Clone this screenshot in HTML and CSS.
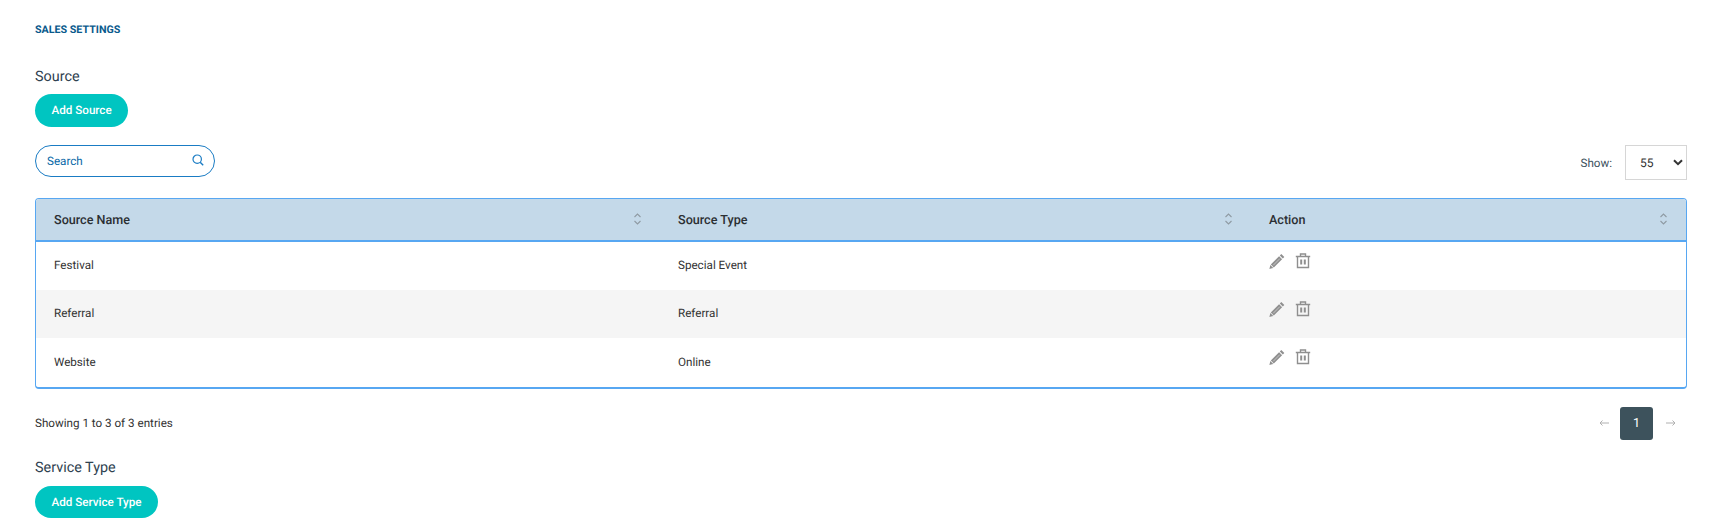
FILE: index.html
```html
<!DOCTYPE html>
<html lang="en">
<head>
<meta charset="utf-8">
<title>Sales Settings</title>
<link rel="stylesheet" href="styles.css">
</head>
<body>
<svg class="defs" width="0" height="0" aria-hidden="true">
  <symbol id="pencil" viewBox="0 0 16 16">
    <path d="M12.300 1l3 3-1.500 1.500-3-3z" fill="currentColor"/>
    <path d="M10.100 3.200l3 3-8.300 8.300-3-3z" fill="currentColor"/>
    <path d="M1.300 12l3 3-3.900.9z" fill="currentColor"/>
    <path d="M10.900 5.600l-6.700 6.700" stroke="#fff" stroke-opacity=".55" stroke-width=".9"/>
  </symbol>
  <symbol id="trash" viewBox="0 0 16 16">
    <path d="M5.500 3V1h5v2M.8 3.500h14.400M2.500 3.500v11h11v-11" fill="none" stroke="currentColor" stroke-width="1.400"/>
    <path d="M5.200 6.500h2v5h-2zM8.800 6.500h2v5h-2z" fill="currentColor"/>
  </symbol>
  <symbol id="sort" viewBox="0 0 9 14">
    <path d="M1.500 5l3-3 3 3M1.500 9l3 3 3-3" fill="none" stroke="currentColor" stroke-width="1.100"/>
  </symbol>
</svg>
<main class="page">
  <h1 class="page-title">SALES SETTINGS</h1>
  <h2 class="section-title">Source</h2>
  <button class="pill-btn" type="button">Add Source</button>
  <div class="toolbar">
    <label class="search">
      <span class="search-text">Search</span>
      <svg class="search-icon" viewBox="0 0 12 12" width="12" height="12"><circle cx="5.200" cy="5.200" r="4.200" fill="none" stroke="currentColor" stroke-width="1.200"/><path d="M8.200 8.200l3 3" stroke="currentColor" stroke-width="1.400"/></svg>
    </label>
    <div class="show">
      <span class="show-label">Show:</span>
      <div class="select"><span>55</span><svg viewBox="0 0 10 7" width="10" height="7"><path d="M1 1.200l4 4 4-4" fill="none" stroke="currentColor" stroke-width="2"/></svg></div>
    </div>
  </div>
  <div class="table-wrap">
    <table class="table">
      <thead>
        <tr>
          <th class="col-a"><div class="th-in">Source Name<svg class="sort"><use href="#sort"/></svg></div></th>
          <th class="col-b"><div class="th-in">Source Type<svg class="sort"><use href="#sort"/></svg></div></th>
          <th class="col-c"><div class="th-in">Action<svg class="sort"><use href="#sort"/></svg></div></th>
        </tr>
      </thead>
      <tbody>
        <tr><td>Festival</td><td>Special Event</td><td class="actions"><svg class="ic"><use href="#pencil"/></svg><svg class="ic"><use href="#trash"/></svg></td></tr>
        <tr class="alt"><td>Referral</td><td>Referral</td><td class="actions"><svg class="ic"><use href="#pencil"/></svg><svg class="ic"><use href="#trash"/></svg></td></tr>
        <tr><td>Website</td><td>Online</td><td class="actions"><svg class="ic"><use href="#pencil"/></svg><svg class="ic"><use href="#trash"/></svg></td></tr>
      </tbody>
    </table>
  </div>
  <div class="table-foot">
    <span class="entries">Showing 1 to 3 of 3 entries</span>
    <div class="pager">
      <svg class="arrow" viewBox="0 0 10 6" width="10" height="6"><path d="M10 3H1M3.500.5L1 3l2.500 2.500" fill="none" stroke="currentColor"/></svg>
      <span class="page-num">1</span>
      <svg class="arrow" viewBox="0 0 10 6" width="10" height="6"><path d="M0 3h9M6.500.5L9 3 6.500 5.500" fill="none" stroke="currentColor"/></svg>
    </div>
  </div>
  <h2 class="section-title second">Service Type</h2>
  <button class="pill-btn pill-last" type="button">Add Service Type</button>
</main>
</body>
</html>
```
FILE: styles.css
```css
* { box-sizing: border-box; }
html, body { margin: 0; padding: 0; background: #fff; }
body { font-family: Roboto, "Liberation Sans", sans-serif; color: #333; overflow: hidden; text-rendering: geometricPrecision; }
.defs { position: absolute; }
.page { padding: 23px 34px 0 35px; }
.page-title { margin: 0; font-size: 10.700px; line-height: 13px; font-weight: 700; color: #0a5a8c; }
.section-title { margin: 32px 0 0; font-size: 14.400px; line-height: 17px; font-weight: 400; color: #2f4250; }
.section-title.second { margin-top: 19px; }
.pill-btn { display: block; margin-top: 9px; height: 33px; padding: 0 16.500px; border: 0; border-radius: 17px; background: #00c5c1; color: #fff; font: 500 11.650px/33px Roboto, sans-serif; text-rendering: geometricPrecision; }
.pill-last { margin-top: 10px; height: 32px; line-height: 32px; }
.toolbar { display: flex; justify-content: space-between; align-items: flex-start; margin-top: 18px; height: 35px; }
.search { display: flex; justify-content: space-between; align-items: center; width: 180px; height: 32px; padding: 0 10px 0 11px; border: 1px solid #1a7cc4; border-radius: 16px; color: #0a6aa8; font-size: 11.650px; }
.search-icon { color: #1a7cc4; margin-bottom: 3px; }
.show { display: flex; align-items: center; gap: 13px; }
.show-label { font-size: 11.650px; color: #40525e; }
.select { display: flex; justify-content: space-between; align-items: center; width: 62px; height: 35px; padding: 0 3px 0 14px; border: 1px solid #d6d6d6; color: #333; font-size: 12px; }
.table-wrap { margin-top: 18px; border: 1px solid #57a7f2; border-bottom-width: 2px; border-radius: 4px; overflow: hidden; }
.table { width: 100%; border-collapse: collapse; table-layout: fixed; font-size: 11.650px; }
.col-a { width: 624px; }
.col-b { width: 591px; }
th { height: 42px; padding: 0; background: #c4d9e9; border-bottom: 2px solid #57a7f2; text-align: left; font-size: 12.600px; font-weight: 500; color: #2b2f33; }
.th-in { display: flex; justify-content: space-between; align-items: center; padding: 1px 18px 0 18px; }
.sort { width: 9px; height: 14px; color: #8f9aa3; margin-top: -3px; }
td { height: 48.500px; padding: 0 18px 1px 18px; color: #333; }
.alt td { background: #f5f5f5; }
.actions { padding-bottom: 10px; }
.ic { width: 16px; height: 16px; color: #8f8f8f; margin-right: 10px; vertical-align: middle; }
.table-foot { display: flex; justify-content: space-between; align-items: center; margin-top: 18px; height: 33px; }
.entries { font-size: 11.650px; color: #333; }
.pager { display: flex; align-items: center; padding-right: 11px; }
.arrow { color: #b0b0b0; }
.page-num { width: 33px; height: 33px; margin: 0 13px 0 11px; border-radius: 3px; background: #3d525c; color: #fff; text-align: center; font: 400 12.600px/33px Roboto, sans-serif; text-rendering: geometricPrecision; }
```
